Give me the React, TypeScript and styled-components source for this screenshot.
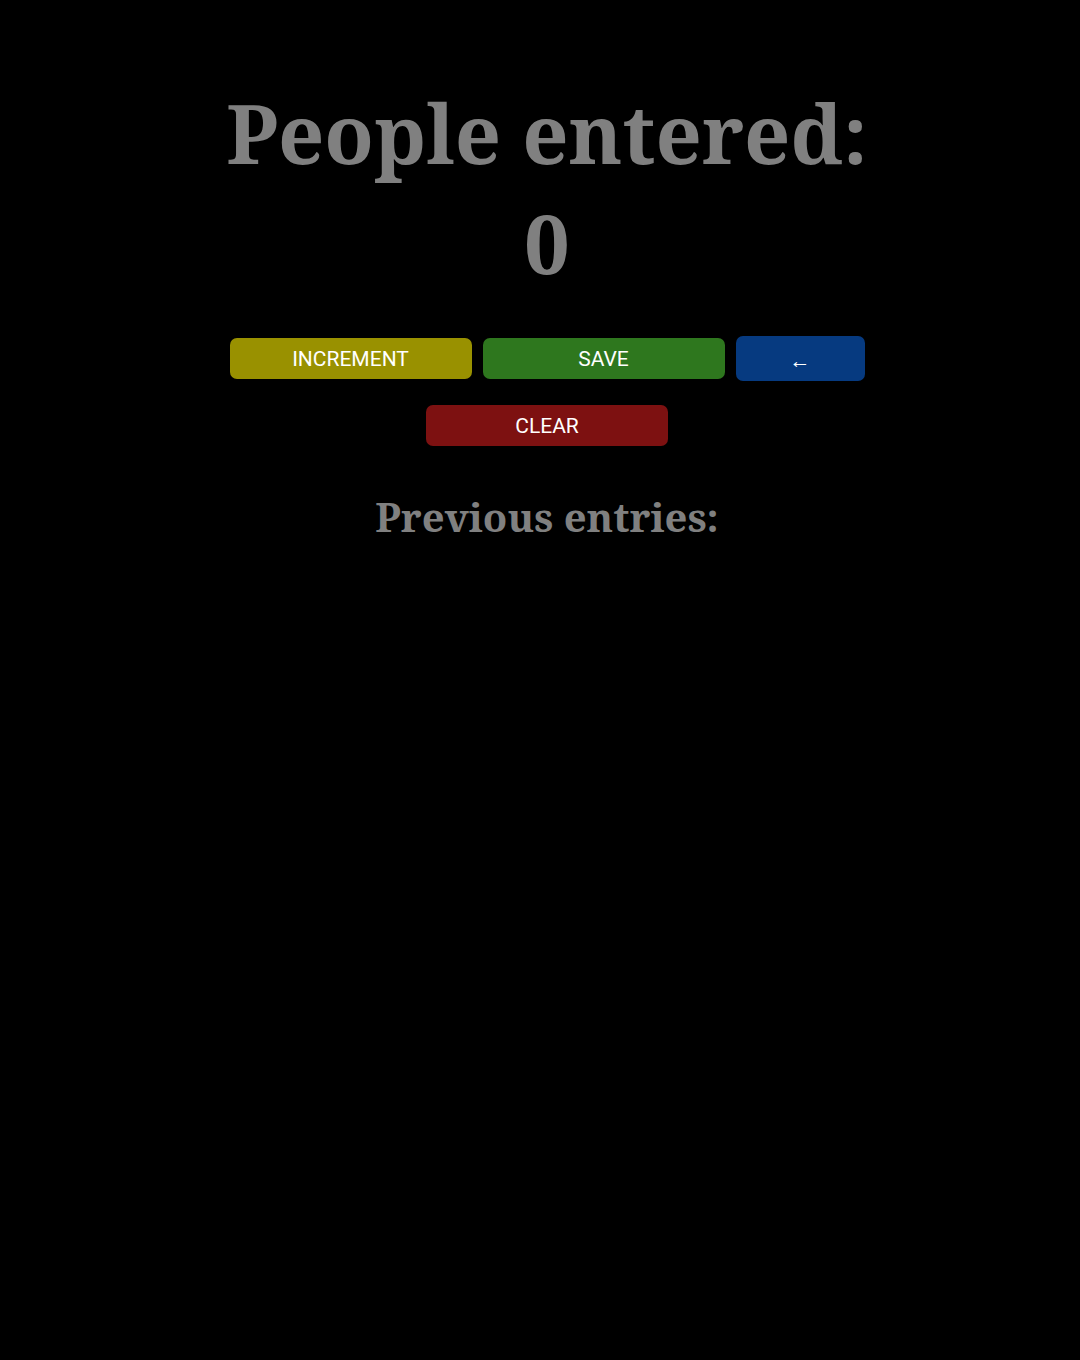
import styled, { createGlobalStyle } from "styled-components";

const GlobalStyle = createGlobalStyle`
  body {
    margin: 0;
    background: #000;
  }
`;

const Page = styled.main`
  min-height: 1360px;
  background: #000;
  display: flex;
  flex-direction: column;
  align-items: center;
  padding: 78px 0 0 14px;
  box-sizing: border-box;
  font-family: "Noto Serif", "DejaVu Serif", serif;
  color: #808080;
`;

const Title = styled.h1`
  margin: 0;
  font-size: 81px;
  line-height: 110px;
  font-weight: 700;
  text-align: center;
`;

const Count = styled.h2`
  margin: 0;
  font-size: 81px;
  line-height: 110px;
  font-weight: 700;
`;

const ButtonRow = styled.div<{ $top: number }>`
  display: flex;
  align-items: center;
  gap: 11px;
  margin-top: ${(p) => p.$top}px;
`;

const Button = styled.button<{ $bg: string; $wide?: boolean }>`
  width: ${(p) => (p.$wide ? "242px" : "129px")};
  height: ${(p) => (p.$wide ? "41px" : "45px")};
  border: none;
  border-radius: 7px;
  background: ${(p) => p.$bg};
  color: #fff;
  font-family: Roboto, "Liberation Sans", sans-serif;
  font-size: 21px;
  padding: 0;
  cursor: pointer;
`;

const Arrow = styled.span`
  display: inline-block;
  font-size: 21px;
  transform: translateY(2px);
`;

const Subtitle = styled.h3`
  margin: 43px 0 0;
  font-size: 40px;
  font-weight: 700;
`;

export default function App() {
  return (
    <Page>
      <GlobalStyle />
      <Title>People entered:</Title>
      <Count>0</Count>
      <ButtonRow $top={38}>
        <Button $bg="#999100" $wide>INCREMENT</Button>
        <Button $bg="#2e771e" $wide>SAVE</Button>
        <Button $bg="#063a80">
          <Arrow>←</Arrow>
        </Button>
      </ButtonRow>
      <ButtonRow $top={24}>
        <Button $bg="#7d1111" $wide>CLEAR</Button>
      </ButtonRow>
      <Subtitle>Previous entries:</Subtitle>
    </Page>
  );
}
